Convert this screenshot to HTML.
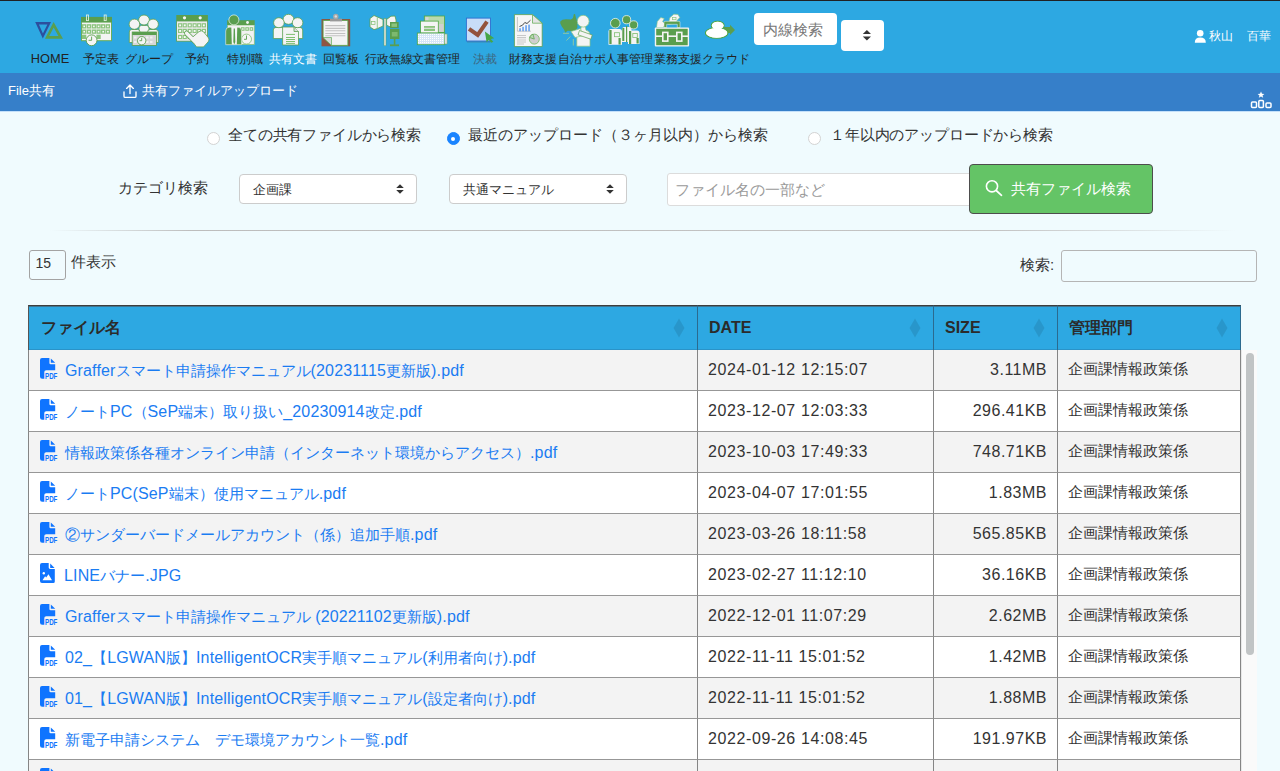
<!DOCTYPE html>
<html><head><meta charset="utf-8">
<style>
*{box-sizing:border-box;margin:0;padding:0}
html,body{width:1280px;height:771px;overflow:hidden}
body{position:relative;background:#f0fbfe;font-family:"Liberation Sans",sans-serif;color:#333}
.abs{position:absolute}
#top{position:absolute;left:0;top:0;width:1280px;height:73px;background:#2da8e2;border-top:1px solid #202124}
#sub{position:absolute;left:0;top:73px;width:1280px;height:39px;background:#367fc9;border-bottom:1px solid #c4e0fa}
.lbl{position:absolute;top:52px;font-size:12px;line-height:14px;color:#222;white-space:nowrap}
.radio{position:absolute;width:13px;height:13px;border-radius:50%;background:#fff;border:1px solid #d3d3d3}
.rtxt{position:absolute;font-size:15px;line-height:18px;color:#333;white-space:nowrap}
.sel{position:absolute;background:#fff;border:1px solid #ccc;border-radius:4px;font-size:13px;color:#333;line-height:16px}
.tbl{position:absolute;left:28px;top:305px;width:1213px;border-collapse:separate;border-spacing:0;table-layout:fixed;font-size:15px}
.tbl th{background:#2da8e2;height:45px;text-align:left;padding:0 0 0 12px;font-weight:bold;color:#2b2b2b;border-top:1px solid #3d3d3d;border-right:1px solid #2b6a8f;position:relative;font-size:15.5px;vertical-align:middle;box-shadow:inset 0 -1px 0 #2a93c8,inset 0 1px 0 #3f7490}
.tbl th:first-child{border-left:1px solid #555;padding-left:12px}
.tbl th+th{padding-left:11px}
.tbl td{height:41px;border-bottom:1px solid #979797;border-right:1px solid #858585;padding:0 0 1px 10px;color:#333;white-space:nowrap;overflow:hidden;vertical-align:middle}
.tbl td:first-child{border-left:1px solid #858585}
.tbl tr.o td{background:#f3f3f3}
.tbl tr.e td{background:#fff}
.tbl td.f{color:#1a7cf2;padding-left:36px;padding-top:4px;position:relative}
.tbl td.d,.tbl td.s{font-size:16px;letter-spacing:0.6px}
.tbl td.s{text-align:right;padding-right:10px;letter-spacing:0.5px}
.l{font-size:16px;letter-spacing:0.15px}
.pi{position:absolute;left:11px;top:7.5px}
.sort{position:absolute;right:12px;top:12px}
</style></head><body>
<div id="top"></div>
<div id="sub"></div>
<!-- search -->
<div class="abs" style="left:754px;top:13px;width:83px;height:32px;background:#fff;border-radius:4px;font-size:14.5px;color:#777;padding:8.5px 0 0 8.5px;line-height:17px">内線検索</div>
<div class="abs" style="left:841px;top:19.5px;width:43px;height:31px;background:#fff;border-radius:4px;z-index:0"></div>

<svg class="abs" style="left:0;top:0" width="1280" height="73" viewBox="0 0 1280 73">
<defs>
<pattern id="dith" width="2" height="2" patternUnits="userSpaceOnUse"><rect width="2" height="2" fill="#d7e6f7"/><rect width="1" height="1" fill="#ffffff"/></pattern>
</defs>
<!-- HOME -->
<path d="M35.2,22 L51,22 L42.8,38.5 Z M38.9,24.4 L47.4,24.4 L42.9,33.4 Z" fill="#2c4f9e" fill-rule="evenodd"/>
<path d="M53.6,22 L63,38.8 L45,38.8 Z M53.7,27.6 L49.2,36 L58.4,36 Z" fill="#5a9e4e" fill-rule="evenodd"/>

<!-- 予定表 -->
<g>
<rect x="81.5" y="22" width="30" height="18.7" fill="#f4f4f4" stroke="#6aae5c" stroke-width="1"/>
<rect x="81" y="16.9" width="31" height="5.3" fill="#5a9e4e"/>
<rect x="86.5" y="15" width="2" height="5.6" fill="none" stroke="#dfeedd" stroke-width="0.9"/>
<rect x="104.2" y="15" width="2" height="5.6" fill="none" stroke="#dfeedd" stroke-width="0.9"/>
<g fill="#8cc47e">
<rect x="82" y="24.2" width="4.3" height="4.3"/><rect x="86.8" y="24.2" width="4.3" height="4.3"/><rect x="91.7" y="24.2" width="4.3" height="4.3"/><rect x="96.4" y="24.2" width="4.3" height="4.3"/><rect x="101" y="24.2" width="4.3" height="4.3"/><rect x="105.7" y="24.2" width="4.3" height="4.3"/>
<rect x="82" y="29.5" width="4.3" height="4.3"/><rect x="86.8" y="29.5" width="4.3" height="4.3"/><rect x="91.7" y="29.5" width="4.3" height="4.3"/><rect x="96.4" y="29.5" width="4.3" height="4.3"/><rect x="101" y="29.5" width="4.3" height="4.3"/><rect x="105.7" y="29.5" width="4.3" height="4.3"/>
<rect x="82" y="34.7" width="4.3" height="4.3"/><rect x="96.4" y="34.7" width="4.3" height="4.3"/>
</g>
<g fill="#fafafa">
<rect x="83.4" y="25.6" width="1.6" height="1.6"/><rect x="88.2" y="25.6" width="1.6" height="1.6"/><rect x="93.1" y="25.6" width="1.6" height="1.6"/><rect x="97.8" y="25.6" width="1.6" height="1.6"/><rect x="102.4" y="25.6" width="1.6" height="1.6"/><rect x="107.1" y="25.6" width="1.6" height="1.6"/>
<rect x="83.4" y="30.9" width="1.6" height="1.6"/><rect x="88.2" y="30.9" width="1.6" height="1.6"/><rect x="93.1" y="30.9" width="1.6" height="1.6"/><rect x="97.8" y="30.9" width="1.6" height="1.6"/><rect x="102.4" y="30.9" width="1.6" height="1.6"/><rect x="107.1" y="30.9" width="1.6" height="1.6"/>
</g>
<circle cx="91.6" cy="40.3" r="5.4" fill="#f6f6f6" stroke="#5a9e4e" stroke-width="0.9"/>
<path d="M91.6,36.6 V40.3 H88.6" fill="none" stroke="#5a9e4e" stroke-width="0.9"/>
</g>

<!-- グループ -->
<g stroke="#5a9e4e" stroke-width="0.8" fill="#f4f4f4">
<ellipse cx="144" cy="20" rx="5.4" ry="5"/>
<path d="M139,33 V28 Q139,25.5 141.5,25.5 H146.5 Q149,25.5 149,28 V33 Z"/>
<path d="M129.3,42.5 V32 Q129.3,29.5 131.8,29.5 H137.5 Q140,29.5 140,32 V42.5 Z"/>
<path d="M147.6,42.5 V32 Q147.6,29.5 150.1,29.5 H155.8 Q158.3,29.5 158.3,32 V42.5 Z"/>
<ellipse cx="134.4" cy="24.2" rx="5.3" ry="5.1"/>
<ellipse cx="153.1" cy="24.2" rx="5.3" ry="5.1"/>
<rect x="132.2" y="32" width="24.2" height="13.4" fill="#d8d8d8"/>
</g>
<rect x="132.2" y="32" width="24.2" height="3" fill="#5a9e4e"/>
<g fill="#f0f0f0"><rect x="134" y="36.5" width="2.5" height="2"/><rect x="146" y="36.5" width="2.5" height="2"/><rect x="150" y="36.5" width="2.5" height="2"/><rect x="134" y="41" width="2.5" height="2"/><rect x="146" y="41" width="2.5" height="2"/><rect x="150" y="41" width="2.5" height="2"/></g>
<circle cx="141.7" cy="40.7" r="4.2" fill="#f6f6f6" stroke="#5a9e4e" stroke-width="0.9"/>
<path d="M141.7,37.8 V40.7 H139.5" fill="none" stroke="#5a9e4e" stroke-width="0.9"/>

<!-- 予約 -->
<rect x="176.6" y="21" width="31" height="20.2" fill="#ececec" stroke="#5a9e4e" stroke-width="0.8"/>
<rect x="176.3" y="15" width="31.6" height="6" fill="#5a9e4e"/>
<circle cx="184.5" cy="17.8" r="1.6" fill="#f6f6f6"/><circle cx="200.2" cy="17.8" r="1.6" fill="#f6f6f6"/>
<g fill="#8cc47e">
<rect x="178" y="23.2" width="4.2" height="4.2"/><rect x="182.6" y="23.2" width="4.2" height="4.2"/><rect x="187.6" y="23.2" width="4.2" height="4.2"/><rect x="192.5" y="23.2" width="4.2" height="4.2"/><rect x="197.1" y="23.2" width="4.2" height="4.2"/><rect x="201.8" y="23.2" width="4.2" height="4.2"/>
<rect x="178" y="28.8" width="4.2" height="4.2"/><rect x="182.6" y="28.8" width="4.2" height="4.2"/><rect x="187.6" y="28.8" width="4.2" height="4.2"/><rect x="192.5" y="28.8" width="4.2" height="4.2"/><rect x="197.1" y="28.8" width="4.2" height="4.2"/><rect x="201.8" y="28.8" width="4.2" height="4.2"/>
<rect x="178" y="34.9" width="4.2" height="4.2"/><rect x="182.6" y="34.9" width="4.2" height="4.2"/><rect x="187.6" y="34.9" width="4.2" height="4.2"/>
</g>
<g fill="#fafafa">
<rect x="179.2" y="24.4" width="1.9" height="1.9"/><rect x="183.8" y="24.4" width="1.9" height="1.9"/><rect x="188.8" y="24.4" width="1.9" height="1.9"/><rect x="193.7" y="24.4" width="1.9" height="1.9"/><rect x="198.2" y="24.4" width="1.9" height="1.9"/><rect x="202.9" y="24.4" width="1.9" height="1.9"/><rect x="179.2" y="30.0" width="1.9" height="1.9"/><rect x="183.8" y="30.0" width="1.9" height="1.9"/><rect x="188.8" y="30.0" width="1.9" height="1.9"/><rect x="193.7" y="30.0" width="1.9" height="1.9"/><rect x="198.2" y="30.0" width="1.9" height="1.9"/><rect x="202.9" y="30.0" width="1.9" height="1.9"/><rect x="179.2" y="36.1" width="1.9" height="1.9"/><rect x="183.8" y="36.1" width="1.9" height="1.9"/><rect x="188.8" y="36.1" width="1.9" height="1.9"/></g>
<path d="M186.6,33.2 L194.5,41" stroke="#5a9e4e" stroke-width="5" stroke-linecap="round"/>
<path d="M190.5,39 L199,31.6 Q201.5,29.8 203.6,31.8 L208.6,38 Q209.6,40 208.2,41.8 L203.6,46.9 H196.5 Z" fill="#f4f4f4" stroke="#5a9e4e" stroke-width="0.8"/>
<path d="M186.6,33.2 L194.5,41" stroke="#f4f4f4" stroke-width="3.6" stroke-linecap="round"/>

<!-- 特別職 -->
<rect x="227.5" y="25" width="26.8" height="19.5" fill="#f2f2f2" stroke="#8cc47e" stroke-width="0.8"/>
<rect x="227.1" y="20.2" width="27.6" height="4.8" fill="#5a9e4e"/>
<circle cx="247.5" cy="22.5" r="1.4" fill="#f6f6f6"/>
<g fill="#8cc47e"><rect x="241" y="27.2" width="3.6" height="3.6"/><rect x="245.3" y="27.2" width="3.6" height="3.6"/><rect x="249.6" y="27.2" width="3.6" height="3.6"/></g>
<g fill="#fafafa"><rect x="242.1" y="28.3" width="1.4" height="1.4"/><rect x="246.4" y="28.3" width="1.4" height="1.4"/><rect x="250.7" y="28.3" width="1.4" height="1.4"/></g>
<circle cx="246.5" cy="39.1" r="5" fill="#f6f6f6" stroke="#8cc47e" stroke-width="0.9"/>
<path d="M246.5,35.5 V39.3 H244" fill="none" stroke="#5a9e4e" stroke-width="0.9"/>
<path d="M225.7,44.7 V31 Q225.7,27.2 229.5,27.2 H238 Q241.6,27.2 241.6,31 V44.7 Z" fill="#5a9e4e" stroke="#f0f0f0" stroke-width="0.6"/>
<path d="M231.3,26.6 H237.3 L236.8,44.6 H231.8 Z" fill="#f4f4f4"/><path d="M233.7,28.5 H234.9 L235.3,42 L234.3,44.6 L233.3,42 Z" fill="#5a9e4e"/>
<circle cx="233.9" cy="19.9" r="5" fill="#5a9e4e" stroke="#eef6ec" stroke-width="0.7"/>

<!-- 共有文書 -->
<g stroke="#5a9e4e" stroke-width="0.8" fill="#f4f4f4">
<ellipse cx="288.5" cy="19.3" rx="5.4" ry="5"/>
<path d="M273.3,38.6 V30 Q273.3,27.4 276,27.4 H281.5 Q284,27.4 284,30 V38.6 Z"/>
<path d="M292,38.6 V30 Q292,27.4 294.7,27.4 H300 Q302.7,27.4 302.7,30 V38.6 Z"/>
<ellipse cx="278.9" cy="22.7" rx="5.3" ry="5"/>
<ellipse cx="297.6" cy="22.7" rx="5.3" ry="5"/>
<path d="M282.6,27 H294 L298.5,31.5 V45 H282.6 Z"/>
<path d="M294,27 V31.5 H298.5" fill="#dcdcdc"/>
</g>
<g stroke="#7fbf70" stroke-width="1"><path d="M286,34.4 H295 M286,37.5 H295 M286,39.5 H295 M286,41.5 H295 M286,43.4 H295"/></g>

<!-- 回覧板 -->
<rect x="321.5" y="19" width="28.7" height="27.3" fill="#8f5443"/>
<path d="M323.1,20.4 H347.9 V45.4 H331.5 L323.1,37.5 Z" fill="#f4f4f4" stroke="#4ea542" stroke-width="0.8"/>
<path d="M323.1,37.5 H331.5 V45.4 Z" fill="#dadada" stroke="#4ea542" stroke-width="0.6"/>
<g stroke="#c2c2c2" stroke-width="1.1"><path d="M325.3,25.6 H345.3 M325.3,28.4 H345.3 M325.3,30.8 H345.3 M325.3,33.5 H345.3 M325.3,35.8 H345.3"/></g>
<rect x="330" y="18.6" width="12" height="2.8" fill="#999"/>
<circle cx="335.8" cy="16.4" r="2.7" fill="#a8a8a8"/><circle cx="335.8" cy="16.4" r="1.2" fill="#ddd"/>

<!-- 行政無線 -->
<rect x="384" y="18.5" width="2" height="27.2" fill="#e8e8e8" stroke="#5a9e4e" stroke-width="0.5"/>
<path d="M370,18.5 L374,15.5 L377.5,17 L383,19.5 V26 L377.5,28.5 L374,29.6 L370,27 Z" fill="#f4f4f4" stroke="#5a9e4e" stroke-width="0.8"/>
<path d="M377.3,17.2 V28.3" stroke="#7fbf70" stroke-width="0.8"/>
<rect x="371.5" y="21.5" width="3.5" height="3" fill="none" stroke="#7fbf70" stroke-width="0.7"/>
<path d="M386.6,19.5 L391,16.2 L395,16 L396,20 V26 L391,27.3 L386.6,25.2 Z" fill="#f4f4f4" stroke="#5a9e4e" stroke-width="0.8"/>
<rect x="390" y="22" width="8.7" height="6.2" fill="#5a9e4e"/>
<rect x="391.5" y="23.5" width="5.5" height="3.4" fill="#8cc47e"/>
<rect x="390" y="29" width="9.4" height="10" fill="#5a9e4e"/>
<rect x="391.8" y="32" width="5.8" height="4.5" fill="#8cc47e" opacity="0.7"/>
<rect x="393.8" y="39" width="1.6" height="5.8" fill="#5a9e4e"/>
<rect x="390" y="44.4" width="9" height="1.8" fill="#5a9e4e"/>

<!-- 文書管理 -->
<rect x="424.3" y="16" width="20.3" height="16.5" fill="#b9d9ad" stroke="#4ea542" stroke-width="0.8"/>
<rect x="425.5" y="17.2" width="3" height="3" fill="#d6d6d6"/>
<rect x="437" y="24" width="6.5" height="8" fill="#d0d0d0"/>
<rect x="420.5" y="21.1" width="17.8" height="12" fill="#f4f4f4" stroke="#4ea542" stroke-width="0.8"/>
<rect x="424" y="26" width="11" height="5" fill="#8cc47e"/>
<rect x="424" y="27.8" width="11" height="1" fill="#e6e6e6"/>
<rect x="417.3" y="33" width="27.5" height="11.7" fill="url(#dith)" stroke="#4ea542" stroke-width="0.8"/>
<rect x="444.5" y="34" width="2.6" height="10" fill="#e0e0e0" stroke="#6aae5c" stroke-width="0.5"/>

<!-- 決裁 -->
<rect x="467" y="40.6" width="23.5" height="2" fill="#3b8fbb"/>
<rect x="466.4" y="18.1" width="24.1" height="22.9" fill="#c8ddf8" stroke="#2f6fd0" stroke-width="0.9"/>
<path d="M469,28.8 L477.7,35 L487,21.6" fill="none" stroke="#93533c" stroke-width="4"/>
<path d="M484.9,31.6 L494.2,38.2 L490.8,39 L493.3,41.7 L491.3,42.8 L488.8,40 L486.6,42.2 Z" fill="#45a648"/>

<!-- 財務支援 -->
<path d="M514.4,14.6 H532.5 L542.2,23.2 V46.6 H514.4 Z" fill="#f6f6f6" stroke="#5a9e4e" stroke-width="0.8"/>
<path d="M532.5,14.6 V23.2 H542.2 Z" fill="#e4e4e4" stroke="#6aae5c" stroke-width="0.8"/>
<path d="M517.4,17 V31.2 H531" fill="none" stroke="#b0b0b0" stroke-width="0.7"/>
<g fill="#5d9cf0"><rect x="519.3" y="28.2" width="1.5" height="3"/><rect x="522.3" y="26.8" width="1.5" height="4.4"/><rect x="525.3" y="25.2" width="1.5" height="6"/><rect x="528.3" y="24.6" width="1.5" height="6.6"/></g>
<path d="M519.5,26.5 L522.5,25.2 L524.8,22.5 L527,23.5 L530.5,20.2" fill="none" stroke="#333" stroke-width="0.9"/>
<g stroke="#c8c8c8" stroke-width="1.1"><path d="M517,35.5 H526 M517,37.6 H526 M517,40 H526 M517,42 H526 M517,44 H524"/></g>
<circle cx="534.3" cy="39.1" r="5" fill="#cfcfcf" stroke="#7fbf70" stroke-width="0.9"/>
<path d="M534.3,39.1 L529.6,37.5 A5,5 0 0 1 533,34.2 Z" fill="#b8dcae" stroke="#5a9e4e" stroke-width="0.7"/>

<!-- 自治サポ -->
<path d="M560.3,21.5 L562.5,19.8 L566,19.2 L571,19.6 L573,18 L573.8,14.2 L575,14 L576,18 L577.3,22 L577.4,27.5 L576,29.8 L572.5,31 L567.5,30.8 L565.3,32.7 L564,29.5 L561.8,26.5 L560.3,23.5 Z" fill="#5a9e4e"/>
<path d="M576.8,46.2 V35 Q576.8,31 580.5,30.2 L581.5,26 H585 L586,30.2 Q590,31 590,35 V46.2 Z" fill="#f4f4f4" stroke="#8cc47e" stroke-width="0.7"/>
<circle cx="583.2" cy="21.2" r="5.9" fill="#f4f4f4" stroke="#8cc47e" stroke-width="0.7"/>
<path d="M571,31.5 L580.5,28.5 L582.5,35.8 L575,37.5 Z" fill="#f4f4f4" stroke="#8cc47e" stroke-width="0.7"/>
<path d="M579.5,30.5 L592.3,35 L590.8,39.2 L578,34.8 Z" fill="#f4f4f4" stroke="#5a9e4e" stroke-width="0.7"/>
<path d="M566.5,40.5 L570.3,36.5 M573.3,45.5 V39 M563,33.3 H569" stroke="#a5d197" stroke-width="0.8"/>

<!-- 人事管理 -->
<g fill="#f4f4f4">
<path d="M622,42 V29.5 Q622,27 624.5,27 H629 Q631.5,27 631.5,29.5 V42 Z"/>
<path d="M608.5,44.8 V31.5 Q608.5,29 611,29 H619.5 Q622,29 622,31.5 V44.8 Z"/>
<path d="M628,44 V33 Q628,30.5 630.5,30.5 H637 Q639.5,30.5 639.5,33 V44 Z"/>
</g>
<g fill="#5a9e4e">
<rect x="622.3" y="28" width="2" height="13"/><rect x="626" y="26" width="1.2" height="16"/>
<rect x="609.3" y="30" width="2.3" height="14"/><rect x="618.5" y="38" width="2.2" height="6.5"/>
<rect x="629" y="31" width="2.2" height="13"/><rect x="636.5" y="38" width="2.2" height="5.5"/>
</g>
<g fill="none" stroke="#7fbf70" stroke-width="0.8"><rect x="614.5" y="32.7" width="5" height="4"/><rect x="632.8" y="33.5" width="4.5" height="4"/></g>
<circle cx="626.6" cy="19.7" r="4.1" fill="#5a9e4e" stroke="#f0f6ee" stroke-width="0.8"/>
<circle cx="615.3" cy="23.2" r="4.8" fill="#5a9e4e" stroke="#f0f6ee" stroke-width="0.8"/>
<circle cx="633.6" cy="24.9" r="4.1" fill="#5a9e4e" stroke="#f0f6ee" stroke-width="0.8"/>

<!-- 業務支援 -->
<path d="M656.5,27.5 L657.3,21.5 L660.8,17.6 L664.2,18.6 L662.6,21.6 L665.2,24.2 L663.2,27.5 Z" fill="#f4f4f4" stroke="#8cc47e" stroke-width="0.6"/>
<path d="M668.3,24.5 L669.8,17.8 L673.8,14.2 L678,14.4 L679.8,17.6 L677.2,20.3 L675.3,23.5 Z" fill="#f4f4f4" stroke="#8cc47e" stroke-width="0.6"/><rect x="672.5" y="17.5" width="3.5" height="2.2" fill="none" stroke="#8cc47e" stroke-width="0.7"/>
<path d="M664,27.6 V22.2 Q664,21.3 665,21.3 H679 Q680,21.3 680,22.2 V27.6 H677.3 V24.3 H666.7 V27.6 Z" fill="#5a9e4e" stroke="#f0f6ee" stroke-width="0.5"/>
<rect x="654.8" y="27.4" width="34.3" height="19.2" rx="1" fill="#f4f4f4"/>
<rect x="656.2" y="28.8" width="31.5" height="16.4" fill="#5a9e4e"/>
<rect x="655" y="35.4" width="34" height="1.6" fill="#f4f4f4"/>
<rect x="662" y="31.6" width="6.6" height="10.3" fill="#f4f4f4"/><rect x="663.6" y="33.2" width="3.4" height="7.1" fill="#5a9e4e"/>
<rect x="676" y="31.6" width="6.6" height="10.3" fill="#f4f4f4"/><rect x="677.6" y="33.2" width="3.4" height="7.1" fill="#5a9e4e"/>

<!-- クラウド -->
<path d="M724,27.1 H730 V24.8 L735,29.9 L730,34.9 V32.9 H724 Z" fill="#5a9e4e"/>
<g stroke="#4ea542" stroke-width="1.1" fill="#fff"><ellipse cx="716.7" cy="32.9" rx="11.2" ry="5.3"/><ellipse cx="717.7" cy="25.6" rx="6.4" ry="4.4"/></g>
<g fill="#fff"><ellipse cx="716.7" cy="32.9" rx="10.6" ry="4.8"/><ellipse cx="717.7" cy="25.6" rx="5.9" ry="3.9"/></g>

<!-- select arrows -->
<path d="M862.8,34 L866.9,30 L871,34 Z M862.8,36.5 H871 L866.9,40.5 Z" fill="#333"/>

<!-- user icon -->
<circle cx="1200.2" cy="33.3" r="3.3" fill="#fff"/>
<path d="M1194.8,42.7 Q1194.8,37.6 1200.2,37.6 Q1205.8,37.6 1205.8,42.7 Z" fill="#fff"/>
</svg>

<!-- nav labels -->
<div class="lbl" style="left:30.8px;font-size:12.8px;top:52.3px">HOME</div>
<div class="lbl" style="left:83px">予定表</div>
<div class="lbl" style="left:125px">グループ</div>
<div class="lbl" style="left:185px">予約</div>
<div class="lbl" style="left:227px">特別職</div>
<div class="lbl" style="left:269px;color:#fff">共有文書</div>
<div class="lbl" style="left:323px">回覧板</div>
<div class="lbl" style="left:365px">行政無線</div>
<div class="lbl" style="left:412px">文書管理</div>
<div class="lbl" style="left:473px;color:#3d6580">決裁</div>
<div class="lbl" style="left:509px">財務支援</div>
<div class="lbl" style="left:558px">自治サポ</div>
<div class="lbl" style="left:605px">人事管理</div>
<div class="lbl" style="left:654px">業務支援</div>
<div class="lbl" style="left:702px">クラウド</div>

<!-- user -->
<div class="abs" style="left:1209px;top:28.5px;font-size:12.45px;line-height:14px;color:#fff;white-space:nowrap">秋山</div><div class="abs" style="left:1247px;top:28.5px;font-size:12.45px;line-height:14px;color:#fff;white-space:nowrap">百華</div>

<!-- sub bar -->
<div class="abs" style="left:8px;top:83px;font-size:13px;line-height:16px;color:#fff;white-space:nowrap">File共有</div>
<div class="abs" style="left:142px;top:83px;font-size:13px;line-height:16px;color:#fff;white-space:nowrap">共有ファイルアップロード</div>
<svg class="abs" style="left:122px;top:83px" width="16" height="16" viewBox="0 0 16 16"><path d="M8,2 V10.5 M4.6,5.4 L8,2 L11.4,5.4" fill="none" stroke="#fff" stroke-width="1.35" stroke-linecap="round" stroke-linejoin="round"/><path d="M2,8.8 V13.2 Q2,14.4 3.2,14.4 H12.8 Q14,14.4 14,13.2 V8.8" fill="none" stroke="#fff" stroke-width="1.35" stroke-linecap="round"/></svg>
<svg class="abs" style="left:1248px;top:88px" width="26" height="22" viewBox="0 0 26 22"><path d="M13,3.5 L14,5.8 L16.4,5.9 L14.5,7.4 L15.2,9.8 L13,8.5 L10.8,9.8 L11.5,7.4 L9.6,5.9 L12,5.8 Z" fill="#fff"/><rect x="3.5" y="14" width="5" height="5.5" rx="1" fill="none" stroke="#fff" stroke-width="1.5"/><rect x="10.8" y="12.5" width="4.6" height="7" rx="1" fill="none" stroke="#fff" stroke-width="1.5"/><rect x="18" y="15" width="5" height="4.5" rx="1" fill="none" stroke="#fff" stroke-width="1.5"/></svg>

<!-- radios -->
<div class="radio" style="left:207px;top:132px"></div>
<div class="rtxt" style="left:228px;top:126px;letter-spacing:-0.16px">全ての共有ファイルから検索</div>
<div class="radio" style="left:446.5px;top:132px;background:#1a84ff;border-color:#1a84ff"><div style="position:absolute;left:3.5px;top:3.5px;width:4px;height:4px;border-radius:50%;background:#fff"></div></div>
<div class="rtxt" style="left:468px;top:126px">最近のアップロード（３ヶ月以内）から検索</div>
<div class="radio" style="left:808px;top:131.5px"></div>
<div class="rtxt" style="left:830px;top:126px;letter-spacing:-0.15px">１年以内のアップロードから検索</div>

<!-- category -->
<div class="rtxt" style="left:118px;top:179px">カテゴリ検索</div>
<div class="sel" style="left:238.5px;top:174px;width:178px;height:30px;padding:7px 0 0 13px">企画課<svg class="abs" style="left:155px;top:8px" width="10" height="12" viewBox="0 0 10 12"><path d="M1.2,5 L5,1.2 L8.8,5 Z M1.2,7 H8.8 L5,10.8 Z" fill="#333"/></svg></div>
<div class="sel" style="left:448.5px;top:174px;width:178px;height:30px;padding:7px 0 0 13px">共通マニュアル<svg class="abs" style="left:155px;top:8px" width="10" height="12" viewBox="0 0 10 12"><path d="M1.2,5 L5,1.2 L8.8,5 Z M1.2,7 H8.8 L5,10.8 Z" fill="#333"/></svg></div>
<div class="abs" style="left:666.5px;top:173px;width:305px;height:33px;background:#fff;border:1px solid #dcdcdc;border-radius:3px;font-size:15px;line-height:18px;color:#9a9a9a;padding:7px 0 0 7.5px">ファイル名の一部など</div>
<div class="abs" style="left:968.5px;top:163.5px;width:184px;height:50px;background:#64c466;border:1px solid #4d4d4d;border-radius:4px;color:#fff;font-size:15.4px;line-height:18px;padding:15px 0 0 41px">共有ファイル検索</div>
<svg class="abs" style="left:984px;top:178px" width="20" height="20" viewBox="0 0 20 20"><circle cx="8" cy="8.3" r="5.6" fill="none" stroke="#fff" stroke-width="1.6"/><path d="M12.2,12.5 L17.5,17.3" stroke="#fff" stroke-width="1.7" stroke-linecap="round"/></svg>

<!-- hr -->
<div class="abs" style="left:50px;top:230px;width:1186px;height:1px;background:linear-gradient(90deg,rgba(190,190,190,0),#bdbdbd 12%,#c4c4c4 80%,rgba(190,190,190,0))"></div>

<!-- length -->
<div class="abs" style="left:28.5px;top:249.5px;width:37px;height:30px;border:1px solid #a3a3a3;border-radius:3px;font-size:14px;line-height:16px;padding:4px 0 0 6px;color:#333">15</div>
<div class="rtxt" style="left:71px;top:253px;font-size:15px">件表示</div>
<div class="rtxt" style="left:1020px;top:256px;font-size:15px">検索:</div>
<div class="abs" style="left:1061px;top:249.5px;width:196px;height:32px;border:1px solid #b5b5b5;border-radius:3px"></div>

<!-- scrollbar -->
<div class="abs" style="left:1241px;top:350px;width:16px;height:421px;background:#fafafa;border-left:1px solid #e8e8e8"></div>
<div class="abs" style="left:1245.5px;top:353px;width:8.5px;height:302px;background:#c1c4c5;border-radius:4.5px"></div>

<table class="tbl"><colgroup><col style="width:670px"><col style="width:236px"><col style="width:124px"><col style="width:183px"></colgroup>
<tr><th>ファイル名<svg class="sort" width="12" height="20" viewBox="0 0 12 20"><path d="M6,0.5 L11.5,10 L6,19.5 L0.5,10 Z" fill="#000" opacity="0.1"/></svg></th><th style="font-size:16px">DATE<svg class="sort" width="12" height="20" viewBox="0 0 12 20"><path d="M6,0.5 L11.5,10 L6,19.5 L0.5,10 Z" fill="#000" opacity="0.1"/></svg></th><th style="font-size:16px">SIZE<svg class="sort" width="12" height="20" viewBox="0 0 12 20"><path d="M6,0.5 L11.5,10 L6,19.5 L0.5,10 Z" fill="#000" opacity="0.1"/></svg></th><th>管理部門<svg class="sort" width="12" height="20" viewBox="0 0 12 20"><path d="M6,0.5 L11.5,10 L6,19.5 L0.5,10 Z" fill="#000" opacity="0.1"/></svg></th></tr>
<tr class="o"><td class="f"><svg class="pi" width="18" height="21" viewBox="0 0 18 21"><path d="M2,0 H9.4 V4.9 Q9.4,6.2 10.7,6.2 H15.2 V12.2 H6.2 Q4.3,12.2 4.3,14 V20.7 H2.2 Q0,20.7 0,18.5 V2 Q0,0 2,0 Z" fill="#0f74ff"/><path d="M10.8,0.4 L15.2,4.8 H10.8 Z" fill="#0f74ff"/><text x="5" y="20.7" font-size="8.6" font-weight="bold" font-family="Liberation Sans" fill="#0f74ff" textLength="12.4" lengthAdjust="spacingAndGlyphs">PDF</text></svg><span class="l">Graffer</span>スマート申請操作マニュアル<span class="l">(20231115</span>更新版<span class="l">).pdf</span></td><td class="d">2024-01-12 12:15:07</td><td class="s">3.11MB</td><td>企画課情報政策係</td></tr>
<tr class="e"><td class="f"><svg class="pi" width="18" height="21" viewBox="0 0 18 21"><path d="M2,0 H9.4 V4.9 Q9.4,6.2 10.7,6.2 H15.2 V12.2 H6.2 Q4.3,12.2 4.3,14 V20.7 H2.2 Q0,20.7 0,18.5 V2 Q0,0 2,0 Z" fill="#0f74ff"/><path d="M10.8,0.4 L15.2,4.8 H10.8 Z" fill="#0f74ff"/><text x="5" y="20.7" font-size="8.6" font-weight="bold" font-family="Liberation Sans" fill="#0f74ff" textLength="12.4" lengthAdjust="spacingAndGlyphs">PDF</text></svg>ノート<span class="l">PC</span>（<span class="l">SeP</span>端末）取り扱い<span class="l">_20230914</span>改定<span class="l">.pdf</span></td><td class="d">2023-12-07 12:03:33</td><td class="s">296.41KB</td><td>企画課情報政策係</td></tr>
<tr class="o"><td class="f"><svg class="pi" width="18" height="21" viewBox="0 0 18 21"><path d="M2,0 H9.4 V4.9 Q9.4,6.2 10.7,6.2 H15.2 V12.2 H6.2 Q4.3,12.2 4.3,14 V20.7 H2.2 Q0,20.7 0,18.5 V2 Q0,0 2,0 Z" fill="#0f74ff"/><path d="M10.8,0.4 L15.2,4.8 H10.8 Z" fill="#0f74ff"/><text x="5" y="20.7" font-size="8.6" font-weight="bold" font-family="Liberation Sans" fill="#0f74ff" textLength="12.4" lengthAdjust="spacingAndGlyphs">PDF</text></svg>情報政策係各種オンライン申請（インターネット環境からアクセス）<span class="l">.pdf</span></td><td class="d">2023-10-03 17:49:33</td><td class="s">748.71KB</td><td>企画課情報政策係</td></tr>
<tr class="e"><td class="f"><svg class="pi" width="18" height="21" viewBox="0 0 18 21"><path d="M2,0 H9.4 V4.9 Q9.4,6.2 10.7,6.2 H15.2 V12.2 H6.2 Q4.3,12.2 4.3,14 V20.7 H2.2 Q0,20.7 0,18.5 V2 Q0,0 2,0 Z" fill="#0f74ff"/><path d="M10.8,0.4 L15.2,4.8 H10.8 Z" fill="#0f74ff"/><text x="5" y="20.7" font-size="8.6" font-weight="bold" font-family="Liberation Sans" fill="#0f74ff" textLength="12.4" lengthAdjust="spacingAndGlyphs">PDF</text></svg>ノート<span class="l">PC(SeP</span>端末）使用マニュアル<span class="l">.pdf</span></td><td class="d">2023-04-07 17:01:55</td><td class="s">1.83MB</td><td>企画課情報政策係</td></tr>
<tr class="o"><td class="f"><svg class="pi" width="18" height="21" viewBox="0 0 18 21"><path d="M2,0 H9.4 V4.9 Q9.4,6.2 10.7,6.2 H15.2 V12.2 H6.2 Q4.3,12.2 4.3,14 V20.7 H2.2 Q0,20.7 0,18.5 V2 Q0,0 2,0 Z" fill="#0f74ff"/><path d="M10.8,0.4 L15.2,4.8 H10.8 Z" fill="#0f74ff"/><text x="5" y="20.7" font-size="8.6" font-weight="bold" font-family="Liberation Sans" fill="#0f74ff" textLength="12.4" lengthAdjust="spacingAndGlyphs">PDF</text></svg>②サンダーバードメールアカウント（係）追加手順<span class="l">.pdf</span></td><td class="d">2023-03-26 18:11:58</td><td class="s">565.85KB</td><td>企画課情報政策係</td></tr>
<tr class="e"><td class="f" style="padding-left:35px"><svg class="pi" width="18" height="21" viewBox="0 0 18 21"><path d="M2,0 H8.7 V4.6 Q8.7,6 10.1,6 H14.8 V18.5 Q14.8,20 13.3,20 H2 Q0,20 0,18 V2 Q0,0 2,0 Z" fill="#0f74ff"/><path d="M10.2,0.6 L14.6,5 H10.2 Z" fill="#0f74ff"/><circle cx="3.8" cy="10.2" r="1.2" fill="#fff"/><path d="M2.5,17.3 L5.1,13.2 L6.2,14.6 L8.5,11.2 L12,17.3 Z" fill="#fff"/></svg><span class="l">LINE</span>バナー<span class="l">.JPG</span></td><td class="d">2023-02-27 11:12:10</td><td class="s">36.16KB</td><td>企画課情報政策係</td></tr>
<tr class="o"><td class="f"><svg class="pi" width="18" height="21" viewBox="0 0 18 21"><path d="M2,0 H9.4 V4.9 Q9.4,6.2 10.7,6.2 H15.2 V12.2 H6.2 Q4.3,12.2 4.3,14 V20.7 H2.2 Q0,20.7 0,18.5 V2 Q0,0 2,0 Z" fill="#0f74ff"/><path d="M10.8,0.4 L15.2,4.8 H10.8 Z" fill="#0f74ff"/><text x="5" y="20.7" font-size="8.6" font-weight="bold" font-family="Liberation Sans" fill="#0f74ff" textLength="12.4" lengthAdjust="spacingAndGlyphs">PDF</text></svg><span class="l">Graffer</span>スマート申請操作マニュアル<span class="l"> (20221102</span>更新版<span class="l">).pdf</span></td><td class="d">2022-12-01 11:07:29</td><td class="s">2.62MB</td><td>企画課情報政策係</td></tr>
<tr class="e"><td class="f"><svg class="pi" width="18" height="21" viewBox="0 0 18 21"><path d="M2,0 H9.4 V4.9 Q9.4,6.2 10.7,6.2 H15.2 V12.2 H6.2 Q4.3,12.2 4.3,14 V20.7 H2.2 Q0,20.7 0,18.5 V2 Q0,0 2,0 Z" fill="#0f74ff"/><path d="M10.8,0.4 L15.2,4.8 H10.8 Z" fill="#0f74ff"/><text x="5" y="20.7" font-size="8.6" font-weight="bold" font-family="Liberation Sans" fill="#0f74ff" textLength="12.4" lengthAdjust="spacingAndGlyphs">PDF</text></svg><span class="l">02_</span>【<span class="l">LGWAN</span>版】<span class="l">IntelligentOCR</span>実手順マニュアル<span class="l">(</span>利用者向け<span class="l">).pdf</span></td><td class="d">2022-11-11 15:01:52</td><td class="s">1.42MB</td><td>企画課情報政策係</td></tr>
<tr class="o"><td class="f"><svg class="pi" width="18" height="21" viewBox="0 0 18 21"><path d="M2,0 H9.4 V4.9 Q9.4,6.2 10.7,6.2 H15.2 V12.2 H6.2 Q4.3,12.2 4.3,14 V20.7 H2.2 Q0,20.7 0,18.5 V2 Q0,0 2,0 Z" fill="#0f74ff"/><path d="M10.8,0.4 L15.2,4.8 H10.8 Z" fill="#0f74ff"/><text x="5" y="20.7" font-size="8.6" font-weight="bold" font-family="Liberation Sans" fill="#0f74ff" textLength="12.4" lengthAdjust="spacingAndGlyphs">PDF</text></svg><span class="l">01_</span>【<span class="l">LGWAN</span>版】<span class="l">IntelligentOCR</span>実手順マニュアル<span class="l">(</span>設定者向け<span class="l">).pdf</span></td><td class="d">2022-11-11 15:01:52</td><td class="s">1.88MB</td><td>企画課情報政策係</td></tr>
<tr class="e"><td class="f"><svg class="pi" width="18" height="21" viewBox="0 0 18 21"><path d="M2,0 H9.4 V4.9 Q9.4,6.2 10.7,6.2 H15.2 V12.2 H6.2 Q4.3,12.2 4.3,14 V20.7 H2.2 Q0,20.7 0,18.5 V2 Q0,0 2,0 Z" fill="#0f74ff"/><path d="M10.8,0.4 L15.2,4.8 H10.8 Z" fill="#0f74ff"/><text x="5" y="20.7" font-size="8.6" font-weight="bold" font-family="Liberation Sans" fill="#0f74ff" textLength="12.4" lengthAdjust="spacingAndGlyphs">PDF</text></svg>新電子申請システム　デモ環境アカウント一覧<span class="l">.pdf</span></td><td class="d">2022-09-26 14:08:45</td><td class="s">191.97KB</td><td>企画課情報政策係</td></tr>
<tr class="o"><td class="f"><svg class="pi" width="18" height="21" viewBox="0 0 18 21"><path d="M2,0 H9.4 V4.9 Q9.4,6.2 10.7,6.2 H15.2 V12.2 H6.2 Q4.3,12.2 4.3,14 V20.7 H2.2 Q0,20.7 0,18.5 V2 Q0,0 2,0 Z" fill="#0f74ff"/><path d="M10.8,0.4 L15.2,4.8 H10.8 Z" fill="#0f74ff"/><text x="5" y="20.7" font-size="8.6" font-weight="bold" font-family="Liberation Sans" fill="#0f74ff" textLength="12.4" lengthAdjust="spacingAndGlyphs">PDF</text></svg>&nbsp;</td><td class="d"></td><td class="s"></td><td></td></tr>
</table>
</body></html>
